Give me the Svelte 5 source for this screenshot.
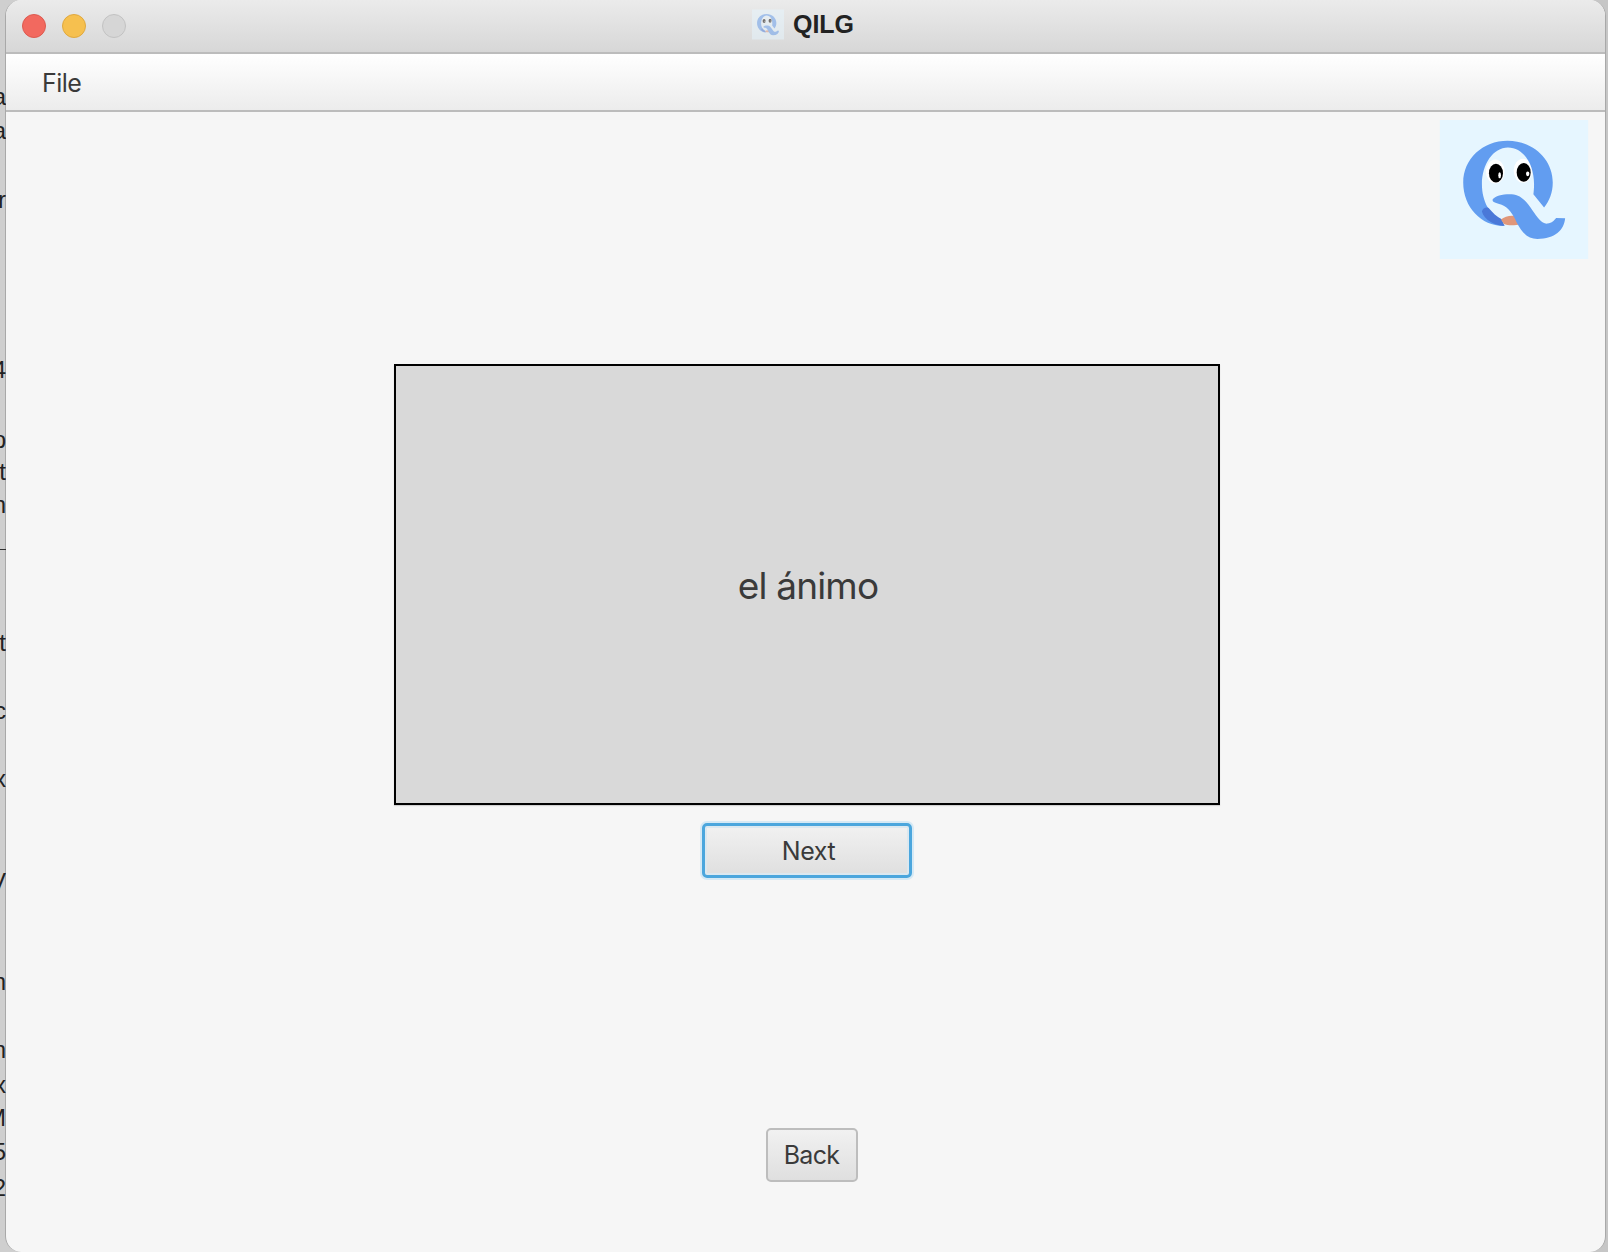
<script>
  // bits of the text window sitting behind this one, only the last pixels show
  const behind = [
    { y: 82, ch: 'a' }, { y: 116, ch: 'a' }, { y: 185, ch: 'r' }, { y: 355, ch: '4' },
    { y: 425, ch: 'p' }, { y: 457, ch: 't' }, { y: 490, ch: 'n' }, { y: 628, ch: 't' },
    { y: 696, ch: 'c' }, { y: 764, ch: 'x' }, { y: 867, ch: 'V' }, { y: 967, ch: 'n' },
    { y: 1035, ch: 'n' }, { y: 1070, ch: 'x' }, { y: 1103, ch: 'M' }, { y: 1137, ch: '5' },
    { y: 1173, ch: '2' }
  ]
</script>

{#snippet logo(cls)}
  <svg class={cls} viewBox="60 58 444 416" aria-hidden="true">
    <rect x="60" y="58" width="444" height="416" fill="#e6f6ff" />
    <ellipse cx="226" cy="212" rx="28" ry="36" fill="#fff" />
    <ellipse cx="309" cy="210" rx="28" ry="36" fill="#fff" />
    <path fill="#629df0" d="M372 320 C388 300 398 275 398 245 C398 175 338 120 263 120 C188 120 130 175 130 245 C130 320 185 375 250 375 L245 355 C210 345 186 300 186 250 C186 190 220 140 264 140 C310 140 342 190 342 250 C342 262 341 272 340 280 Z" />
    <path fill="#4a78d8" d="M186 332 C188 322 198 318 206 321 C218 335 230 347 245 355 L254 375 C225 374 192 358 186 332 Z" />
    <path fill="#e0977a" d="M243 356 C256 344 282 341 293 349 L301 370 C285 374 262 374 252 369 Z" />
    <path fill="#629df0" d="M218 296 C226 284 250 279 275 280 C304 282 320 303 337 328 C352 350 366 370 382 368 C396 366 402 358 408 351 L435 352 C432 387 405 414 352 414 C322 414 304 392 290 365 C280 342 266 320 245 312 C232 307 216 306 218 296 Z" />
    <ellipse cx="228" cy="217" rx="21" ry="28" fill="#000" />
    <ellipse cx="311" cy="215" rx="21" ry="28" fill="#000" />
    <ellipse cx="239" cy="223" rx="4" ry="9" fill="#fff" />
    <ellipse cx="323" cy="219" rx="5" ry="7" fill="#fff" />
  </svg>
{/snippet}

<div class="desk">
  <div class="behind">
    {#each behind as b}
      <span class="frag" style="top:{b.y}px">{b.ch}</span>
    {/each}
    <span class="rule"></span>
  </div>

  <div class="window">
    <header class="titlebar">
      <div class="lights">
        <span class="light red"></span>
        <span class="light yellow"></span>
        <span class="light off"></span>
      </div>
      <div class="title">
        {@render logo('title-icon')}
        <span>QILG</span>
      </div>
    </header>

    <nav class="menubar"><span>File</span></nav>

    <main class="content">
      <div class="logo-row">{@render logo('logo')}</div>
      <div class="card">el ánimo</div>
      <button class="btn next">Next</button>
      <button class="btn back">Back</button>
    </main>
  </div>
</div>

<style>
  :global(body) { margin: 0; background: #fff; }
  .desk { position: relative; width: 1608px; height: 1252px; overflow: hidden; background: linear-gradient(90deg, #cfcfcf, #c6c6c6); font-family: Inter, "Liberation Sans", sans-serif; }

  .behind { position: absolute; left: 0; top: 0; width: 6px; height: 1252px; overflow: hidden; }
  .frag { position: absolute; right: 0; font: 24px/30px "Liberation Sans", sans-serif; color: #222; }
  .rule { position: absolute; left: 0; top: 549px; width: 6px; height: 1px; background: #333; }

  .window { display: flex; flex-direction: column; box-sizing: border-box; width: 1601px; height: 1252px; margin-left: 5px; border-left: 1px solid #a9a9a9; border-right: 1px solid #a9a9a9; border-radius: 16px; overflow: hidden; background: #f6f6f6; }

  .titlebar { display: grid; grid-template-columns: 1fr auto 1fr; align-items: center; box-sizing: border-box; height: 54px; border-bottom: 2px solid #bcbcbc; background: linear-gradient(#ebebeb, #d7d7d7); }
  .lights { display: flex; gap: 16px; padding-left: 16px; }
  .light { box-sizing: border-box; width: 24px; height: 24px; border-radius: 50%; border: 1px solid; }
  .red { background: #f2695f; border-color: #dc5a50; }
  .yellow { background: #f6c04f; border-color: #dfa83f; }
  .off { background: #d6d6d6; border-color: #c2c2c2; }
  .title { display: flex; align-items: center; gap: 9px; padding: 0 5px 3px 0; font: 700 25px "Liberation Sans", sans-serif; color: #222; }
  .title-icon { display: block; width: 32px; height: 31px; opacity: .5; }

  .menubar { display: flex; align-items: center; box-sizing: border-box; height: 58px; padding: 2px 0 0 36px; border-bottom: 2px solid #bcbcbc; background: linear-gradient(#fff, #ececec); font-size: 25px; color: #3a3a3a; letter-spacing: -.5px; }

  .content { flex: 1; display: flex; flex-direction: column; align-items: center; }
  .logo-row { align-self: stretch; display: flex; justify-content: flex-end; padding: 8px 16px 0 0; }
  .logo { display: block; width: 150px; height: 139px; }

  .card { display: flex; align-items: center; justify-content: center; box-sizing: border-box; width: 826px; height: 441px; margin: 105px 0 0 2px; padding: 2px 0 0 3px; border: 2px solid #000; background: #d9d9d9; font-size: 37px; letter-spacing: -.8px; color: #3a3a3a; box-shadow: 0 1px 1px rgba(0,0,0,.15); }

  .btn { box-sizing: border-box; border-radius: 5px; font-family: inherit; font-size: 25px; letter-spacing: -.4px; color: #3a3a3a; background: linear-gradient(#f1f1f1, #dfdfdf); }
  .next { width: 210px; height: 55px; margin: 18px 0 0 2px; padding: 0 0 0 4px; border: 3px solid #4ba6dd; box-shadow: 0 0 0 2px #d5e9f5, inset 0 0 0 2px #dbe8f0; }
  .back { width: 92px; height: 54px; margin: 250px 0 0 12px; padding: 0; letter-spacing: -.7px; border: 2px solid #bdbdbd; }
</style>
